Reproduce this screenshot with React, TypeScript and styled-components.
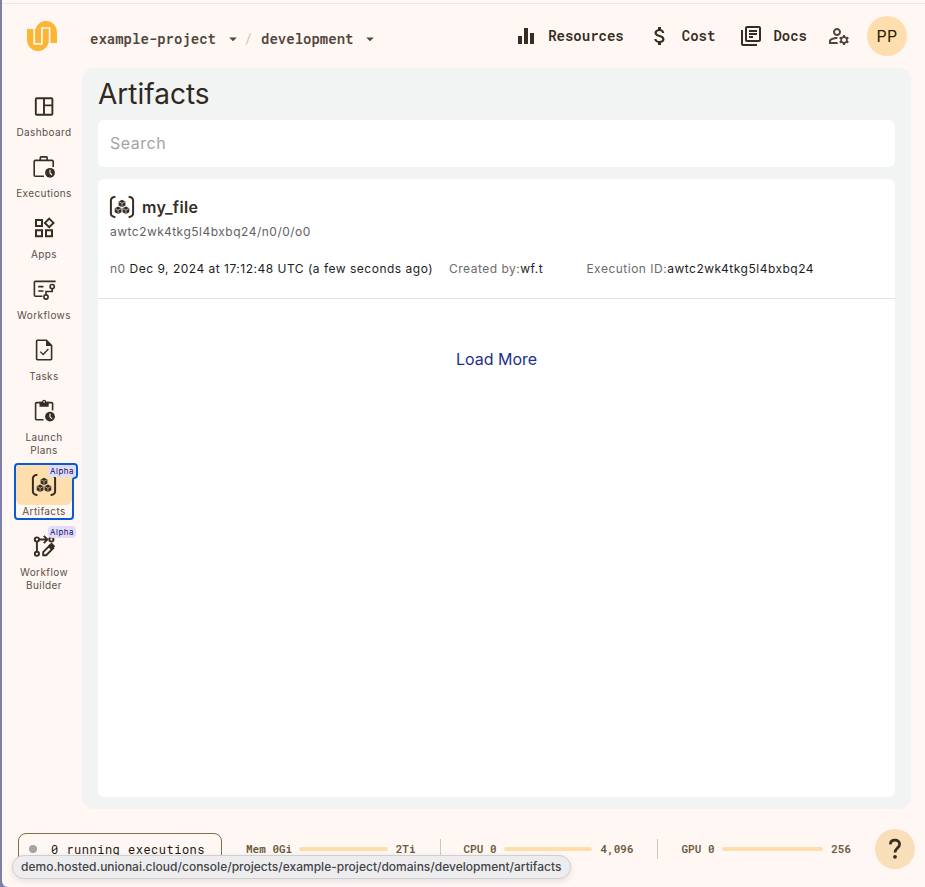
import React from "react";
import styled, { createGlobalStyle } from "styled-components";
import {
  MdArrowDropDown,
  MdAttachMoney,
  MdEqualizer,
  MdOutlineLibraryBooks,
  MdOutlineManageAccounts,
} from "react-icons/md";

const ink = "#372d22";
const page = "#fff7f4";
const mono = `"Roboto Mono", "DejaVu Sans Mono", "Liberation Mono", monospace`;

const GlobalStyle = createGlobalStyle`
  *, *::before, *::after { box-sizing: border-box; }
  body { margin: 0; background: ${page}; font-family: Inter, "Liberation Sans", sans-serif; color: ${ink}; overflow: hidden; }
`;

const Window = styled.div`
  width: 925px;
  height: 887px;
  background: #7e7fa8;
  padding-left: 2px;
`;
const Page = styled.div`
  position: relative;
  height: 887px;
  display: flex;
  flex-direction: column;
  background: ${page};
  border-bottom-left-radius: 6px;
  padding-top: 3px;
`;
const Header = styled.header`
  height: 65px;
  border-top: 1px solid #efe7e4;
  display: flex;
  align-items: flex-start;
  padding: 0 18px 0 25px;
`;
const Logo = styled.svg`
  width: 30px;
  height: 30px;
  margin-top: 17px;
  margin-right: 33px;
`;
const Crumbs = styled.nav`
  display: flex;
  align-items: center;
  height: 22px;
  margin-top: 24px;
  font: 600 14px/22px ${mono};
  color: #51463a;
`;
const Caret = styled(MdArrowDropDown)`
  width: 18px;
  height: 18px;
  margin-left: 8px;
`;
const Slash = styled.span`
  width: 19px;
  padding-left: 2px;
  font-weight: 400;
  color: #cfc5b4;
`;
const TopLinks = styled.div`
  margin-left: auto;
  display: flex;
  align-items: center;
  height: 40px;
  margin-top: 12px;
`;
const TopLink = styled.a<{ $gap: number }>`
  display: flex;
  align-items: center;
  gap: 10px;
  margin-right: ${(p) => p.$gap}px;
  font: 600 14px/20px ${mono};
  color: ${ink};
  svg { width: 24px; height: 24px; }
`;
const Manage = styled(MdOutlineManageAccounts)`
  width: 24px;
  height: 24px;
  color: #51463a;
  margin-right: 16px;
`;
const Avatar = styled.div<{ $help?: boolean }>`
  width: 40px;
  height: 40px;
  border-radius: 50%;
  display: grid;
  place-items: center;
  background: ${(p) => (p.$help ? "#f8deb9" : "#ffdead")};
  color: #2a1c04;
  font-size: 16px;
  letter-spacing: 0.2px;
`;
const Body = styled.div`
  height: 741px;
  display: flex;
`;
const Sidebar = styled.nav`
  width: 80px;
  padding: 18px 10px 0 14px;
  display: flex;
  flex-direction: column;
  gap: 8px;
`;
const NavItem = styled.a`
  position: relative;
  width: 56px;
  display: block;
  text-align: center;
  font-size: 10px;
  line-height: 13px;
  letter-spacing: 0.4px;
  color: #5a4f46;
`;
const NavLabel = styled.div`
  margin: 0 -6px;
`;
const IconBox = styled.div<{ $active?: boolean }>`
  height: 40px;
  border-radius: 4px 4px 6px 6px;
  display: grid;
  place-items: center;
  background: ${(p) => (p.$active ? "#ffdead" : "transparent")};
  color: ${ink};
`;
const Badge = styled.span`
  position: absolute;
  z-index: 1;
  right: -4px;
  top: 0;
  width: 28px;
  height: 12px;
  border-radius: 4px;
  background: #e2dcfb;
  color: #17115c;
  font-size: 8px;
  line-height: 12px;
  letter-spacing: 0.45px;
`;
const FocusRing = styled.svg`
  position: absolute;
  z-index: 2;
  left: -2px;
  top: -2px;
  width: 64px;
  height: 57px;
`;
const Panel = styled.main`
  width: 829px;
  padding: 12px 16px;
  border-radius: 12px;
  background: #f1f4f3;
  display: flex;
  flex-direction: column;
`;
const Title = styled.h1`
  margin: 0;
  height: 40px;
  font-size: 28px;
  font-weight: 400;
  line-height: 28px;
  color: #2f2921;
`;
const Search = styled.div`
  height: 47px;
  border-radius: 6px;
  background: #fff;
  padding: 0 12px;
  font-size: 16px;
  line-height: 47px;
  letter-spacing: 0.5px;
  color: #a4a4a4;
`;
const List = styled.section`
  margin-top: 12px;
  height: 618px;
  border-radius: 6px;
  background: #fff;
`;
const Entry = styled.article`
  height: 120px;
  padding: 16px 12px 0;
  border-bottom: 1px solid #e2e3e2;
`;
const EntryName = styled.div`
  display: flex;
  align-items: center;
  gap: 7px;
  height: 24px;
  margin-left: -1px;
  font-size: 16px;
  font-weight: 600;
  letter-spacing: 0.35px;
`;
const EntryPath = styled.div`
  margin-top: 5px;
  font-size: 12px;
  line-height: 16px;
  letter-spacing: 0.5px;
  color: #626262;
`;
const Meta = styled.div`
  display: flex;
  margin-top: 21px;
  font-size: 12px;
  line-height: 16px;
  letter-spacing: 0.5px;
  color: #6b6b6b;
  white-space: pre;
  b { font-weight: 400; color: #1d1d1d; }
`;
const MetaCell = styled.span<{ $w?: number }>`
  width: ${(p) => (p.$w ? `${p.$w}px` : "auto")};
`;
const LoadMore = styled.button`
  display: block;
  margin: 48px auto 0;
  padding: 0;
  border: 0;
  background: none;
  font: 400 16px/24px Inter, sans-serif;
  color: #1d2f88;
`;
const Footer = styled.footer`
  height: 78px;
  padding: 20px 10px 0 16px;
  display: flex;
  align-items: flex-start;
`;
const Running = styled.div`
  width: 204px;
  height: 40px;
  margin-top: 4px;
  border: 1px solid #80704f;
  border-radius: 8px;
  display: flex;
  align-items: flex-start;
  padding: 5px 0 0 10px;
  font: 12px/20px ${mono};
  letter-spacing: 0.5px;
  color: #1c1813;
  white-space: nowrap;
`;
const Dot = styled.i`
  width: 8px;
  height: 8px;
  margin: 6px 14px 0 0;
  border-radius: 50%;
  background: #a4a4a4;
`;
const Gauge = styled.div<{ $x: number; $w: number }>`
  display: flex;
  align-items: center;
  height: 40px;
  width: ${(p) => p.$w}px;
  margin-left: ${(p) => p.$x}px;
  font: 600 11px/16px ${mono};
  color: #6b5a3a;
  white-space: nowrap;
`;
const Bar = styled.i`
  flex: 1;
  height: 4px;
  margin: 0 8px 0 7px;
  border-radius: 2px;
  background: #ffdead;
`;
const Divider = styled.i<{ $x: number }>`
  width: 1px;
  height: 20px;
  margin-top: 10px;
  margin-left: ${(p) => p.$x}px;
  background: #d2c5b4;
`;
const HelpSlot = styled.div`
  margin-left: auto;
  svg { width: 18px; height: 22px; }
`;
const StatusUrl = styled.div`
  position: absolute;
  left: 10px;
  top: 855px;
  width: 559px;
  height: 24px;
  border: 1px solid #cfcfd2;
  border-radius: 12px;
  background: #ededf0;
  box-shadow: 0 2px 6px rgba(60, 40, 30, 0.12);
  padding-left: 8px;
  font-size: 12px;
  font-weight: 500;
  line-height: 22px;
  letter-spacing: 0.01px;
  color: #444447;
  white-space: nowrap;
`;

const Glyph = ({ children }: { children: React.ReactNode }) => (
  <svg width="24" height="24" viewBox="0 0 24 24" fill="none" stroke="currentColor" strokeWidth="1.6">
    {children}
  </svg>
);

const DashboardIcon = () => (
  <Glyph>
    <rect x="3.8" y="4.2" width="16.6" height="16.6" rx="1" strokeWidth="1.9" />
    <path d="M12 4.2v16.6M12 11.4h8.4" strokeWidth="1.9" />
  </Glyph>
);
const Clock = ({ x, y }: { x: number; y: number }) => (
  <g transform={`translate(${x} ${y})`}>
    <circle r="4.9" fill="currentColor" stroke="none" />
    <path d="M0 -3V.2L2 2.2" stroke={page} strokeWidth="1.1" />
  </g>
);
const ExecutionsIcon = () => (
  <Glyph>
    <path d="M12 21.2H3.2a1 1 0 0 1-1-1V6.4a1 1 0 0 1 1-1h17a1 1 0 0 1 1 1V12" />
    <path d="M8.3 5.4V2.6a.7.7 0 0 1 .7-.7h5.4a.7.7 0 0 1 .7.7v2.8" />
    <Clock x={18} y={17.8} />
  </Glyph>
);
const AppsIcon = () => (
  <Glyph>
    <path d="M4 4h6v6H4zM4 14.2h6v6H4zM14 14.2h6v6h-6zM17.2 2.6l4.3 4.3-4.3 4.3-4.3-4.3z" strokeWidth="2" />
  </Glyph>
);
const WorkflowsIcon = () => (
  <Glyph>
    <path d="M10.5 19.2H3.4a1 1 0 0 1-1-1V5.4a1 1 0 0 1 1-1h20.2" />
    <path d="M6.2 9.6h5.3M6.2 14h5.3" />
    <circle cx="20.2" cy="9.6" r="2.1" />
    <circle cx="14" cy="20" r="2.1" />
    <path d="M14 17.8v-3.3h6.2v-2.8" />
  </Glyph>
);
const TasksIcon = () => (
  <Glyph>
    <path d="M5.400 2.300h9l5.200 5.200v13.400a.8.8 0 0 1-.8.8H5.400a.8.8 0 0 1-.8-.8V3.100a.8.8 0 0 1 .8-.8z" />
    <path d="M14 2.100v5.900h5.900z" fill="currentColor" stroke="none" />
    <path d="M8.200 13.600l2.900 2.900 5.300-5.500" strokeWidth="1.3" />
  </Glyph>
);
const LaunchIcon = () => (
  <Glyph>
    <path d="M11.500 20.800H4.600a1 1 0 0 1-1-1V4.600a1 1 0 0 1 1-1h15a1 1 0 0 1 1 1v7" />
    <path d="M7.500 2.800h2.600a2 2 0 0 1 4 0h2.600v5H7.500z" fill="currentColor" stroke="none" />
    <circle cx="12.100" cy="2.900" r=".8" fill={page} stroke="none" />
    <Clock x={18} y={17.6} />
  </Glyph>
);
const Cube = ({ x, y, bg }: { x: number; y: number; bg: string }) => (
  <g transform={`translate(${x} ${y})`}>
    <path d="M0-3.7 3.4-1.9V2L0 3.8-3.4 2V-1.9z" fill="currentColor" stroke="none" />
    <path d="M-3-1.6 0 0 3-1.6M0 0V3.6" stroke={bg} strokeWidth=".6" />
  </g>
);
const ArtifactsIcon = ({ bg }: { bg: string }) => (
  <svg width="26" height="24" viewBox="0 0 26 24" fill="none" stroke="currentColor" strokeWidth="2">
    <path d="M6.4 1.8C3.7 2.2 1.9 3.4 1.9 5.4v13.2c0 2 1.8 3.2 4.5 3.6" />
    <path d="M19.6 1.8c2.7.4 4.500 1.600 4.500 3.600v13.200c0 2-1.800 3.200-4.500 3.600" />
    <Cube x={13} y={8.4} bg={bg} />
    <Cube x={9.1} y={15.2} bg={bg} />
    <Cube x={16.9} y={15.2} bg={bg} />
  </svg>
);
const BuilderIcon = () => (
  <Glyph>
    <circle cx="4.9" cy="5.5" r="2.1" strokeWidth="1.9" />
    <circle cx="19.4" cy="5.5" r="2.1" strokeWidth="1.9" />
    <circle cx="4.9" cy="19.8" r="2.1" strokeWidth="1.9" />
    <path d="M4.9 7.600v10M7 5.500h7.800M11.800 1.900 15.400 5.500l-3.600 3.600" strokeWidth="1.9" />
    <path d="M11.200 21.200v-3l7-7 3 3-7 7z" strokeWidth="1.9" />
    <path d="M15.600 12.400l3.200-3.200a1 1 0 0 1 1.400 0l2.400 2.400a1 1 0 0 1 0 1.400l-3.200 3.200z" fill="currentColor" stroke="none" />
  </Glyph>
);

type Item = { label: React.ReactNode; icon: React.ReactNode; alpha?: boolean; active?: boolean };
const items: Item[] = [
  { label: "Dashboard", icon: <DashboardIcon /> },
  { label: "Executions", icon: <ExecutionsIcon /> },
  { label: "Apps", icon: <AppsIcon /> },
  { label: "Workflows", icon: <WorkflowsIcon /> },
  { label: "Tasks", icon: <TasksIcon /> },
  { label: <>Launch<br />Plans</>, icon: <LaunchIcon /> },
  { label: "Artifacts", icon: <ArtifactsIcon bg="#ffdead" />, alpha: true, active: true },
  { label: <>Workflow<br />Builder</>, icon: <BuilderIcon />, alpha: true },
];

export default function App() {
  return (
    <Window>
      <GlobalStyle />
      <Page>
        <Header>
          <Logo viewBox="0 0 30 30" fill="none">
            <path d="M0 8H8.4A11 11 0 0 1 30 11V22H21.6A11 11 0 0 1 0 19z" fill="#fdb535" />
            <path d="M7.2 7v15.800H14.900V7h7.700v16" stroke={page} strokeWidth="1.7" />
          </Logo>
          <Crumbs>
            <span>example-project</span>
            <Caret />
            <Slash>/</Slash>
            <span>development</span>
            <Caret />
          </Crumbs>
          <TopLinks>
            <TopLink $gap={24}><MdEqualizer />Resources</TopLink>
            <TopLink $gap={24}><MdAttachMoney />Cost</TopLink>
            <TopLink $gap={20}><MdOutlineLibraryBooks />Docs</TopLink>
            <Manage />
            <Avatar>PP</Avatar>
          </TopLinks>
        </Header>
        <Body>
          <Sidebar>
            {items.map((it, i) => (
              <NavItem key={i}>
                <IconBox $active={it.active}>{it.icon}</IconBox>
                <NavLabel>{it.label}</NavLabel>
                {it.alpha && <Badge>Alpha</Badge>}
                {it.active && (
                  <FocusRing viewBox="0 0 64 57" fill="none">
                    <path
                      d="M4 1H60a3 3 0 0 1 3 3V12a3 3 0 0 1-3 3q-1 0-1 1.5V53a3 3 0 0 1-3 3H4a3 3 0 0 1-3-3V4a3 3 0 0 1 3-3z"
                      stroke="#0b5bd0"
                      strokeWidth="2"
                    />
                  </FocusRing>
                )}
              </NavItem>
            ))}
          </Sidebar>
          <Panel>
            <Title>Artifacts</Title>
            <Search>Search</Search>
            <List>
              <Entry>
                <EntryName><ArtifactsIcon bg="#fff" /><span>my_file</span></EntryName>
                <EntryPath>awtc2wk4tkg5l4bxbq24/n0/0/o0</EntryPath>
                <Meta>
                  <MetaCell $w={339}>n0 <b>Dec 9, 2024 at 17:12:48 UTC (a few seconds ago)</b></MetaCell>
                  <MetaCell $w={137.4}>Created by:<b>wf.t</b></MetaCell>
                  <MetaCell>Execution ID:<b>awtc2wk4tkg5l4bxbq24</b></MetaCell>
                </Meta>
              </Entry>
              <LoadMore>Load More</LoadMore>
            </List>
          </Panel>
        </Body>
        <Footer>
          <Running><Dot />0 running executions</Running>
          <Gauge $x={24} $w={169.5}>Mem 0Gi<Bar />2Ti</Gauge>
          <Divider $x={24.5} />
          <Gauge $x={22.5} $w={170}>CPU 0<Bar />4,096</Gauge>
          <Divider $x={23.5} />
          <Gauge $x={23.5} $w={169.5}>GPU 0<Bar />256</Gauge>
          <HelpSlot>
            <Avatar $help>
              <svg viewBox="0 0 18 22" fill="none" stroke={ink} strokeWidth="2.7">
                <path d="M4.3 6.3C4.5 3.5 6.5 2.2 9 2.2c2.7 0 4.6 1.6 4.6 4 0 3.6-4.6 4-4.6 8.3" />
                <circle cx="9" cy="18.8" r="1.9" fill={ink} stroke="none" />
              </svg>
            </Avatar>
          </HelpSlot>
        </Footer>
        <StatusUrl>demo.hosted.unionai.cloud/console/projects/example-project/domains/development/artifacts</StatusUrl>
      </Page>
    </Window>
  );
}
